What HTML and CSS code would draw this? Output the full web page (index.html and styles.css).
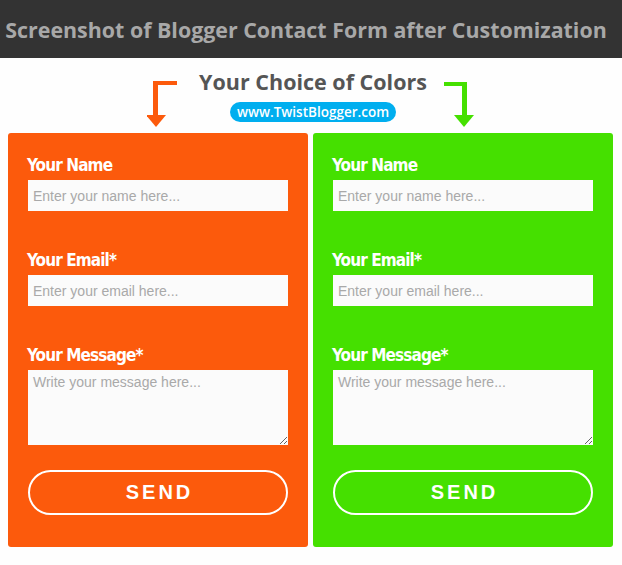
FILE: index.html
```html
<!DOCTYPE html>
<html lang="en">
<head>
<meta charset="utf-8">
<title>Blogger Contact Form</title>
<link rel="stylesheet" href="styles.css">
</head>
<body>
<header class="topbar">
  <h1 class="topbar-title">Screenshot of Blogger Contact Form after Customization</h1>
</header>
<section class="intro">
  <svg class="arrow arrow-left" width="30" height="47" viewBox="0 0 30 47">
    <rect x="6" y="1" width="24" height="4" fill="#fc5a0c"/>
    <rect x="6" y="1" width="5" height="36" fill="#fc5a0c"/>
    <polygon points="-1,35 19,35 9,47" fill="#fc5a0c"/>
  </svg>
  <div class="intro-text">
    <h2 class="intro-title">Your Choice of Colors</h2>
    <span class="badge">www.TwistBlogger.com</span>
  </div>
  <svg class="arrow arrow-right" width="31" height="47" viewBox="0 0 31 47">
    <rect x="0" y="2" width="23" height="4" fill="#45e000"/>
    <rect x="18" y="2" width="5" height="35" fill="#45e000"/>
    <polygon points="10,35 30,35 20,47" fill="#45e000"/>
  </svg>
</section>
<main class="forms">
  <form class="card card-orange">
    <div class="field">
      <label class="label">Your Name</label>
      <input class="input" type="text" placeholder="Enter your name here...">
    </div>
    <div class="field">
      <label class="label">Your Email*</label>
      <input class="input" type="text" placeholder="Enter your email here...">
    </div>
    <div class="field field-last">
      <label class="label">Your Message*</label>
      <textarea class="textarea" placeholder="Write your message here..."></textarea>
    </div>
    <button class="send" type="button">SEND</button>
  </form>
  <form class="card card-green">
    <div class="field">
      <label class="label">Your Name</label>
      <input class="input" type="text" placeholder="Enter your name here...">
    </div>
    <div class="field">
      <label class="label">Your Email*</label>
      <input class="input" type="text" placeholder="Enter your email here...">
    </div>
    <div class="field field-last">
      <label class="label">Your Message*</label>
      <textarea class="textarea" placeholder="Write your message here..."></textarea>
    </div>
    <button class="send" type="button">SEND</button>
  </form>
</main>
</body>
</html>
```
FILE: styles.css
```css
* { box-sizing: border-box; }
html, body { margin: 0; padding: 0; background: #fefefe; }
body { font-family: "Open Sans", "DejaVu Sans", sans-serif; }

.topbar {
  height: 58px;
  background: #333333;
  display: flex;
  align-items: center;
  justify-content: center;
  padding-right: 10px;
}
.topbar-title {
  margin: 0;
  font-size: 21.4px;
  font-weight: 700;
  color: #a8a8a8;
  white-space: nowrap;
  letter-spacing: 0;
}

.intro {
  display: flex;
  justify-content: center;
  align-items: flex-start;
  padding-top: 11px;
  height: 75px;
}
.arrow { display: block; flex: none; margin-top: 11px; }
.arrow-left { margin-right: 22px; }
.arrow-right { margin-left: 17px; }
.intro-text {
  display: flex;
  flex-direction: column;
  align-items: center;
}
.intro-title {
  margin: 0;
  font-size: 21.5px;
  line-height: 25px;
  font-weight: 700;
  color: #555555;
}
.badge {
  margin-top: 8px;
  height: 20px;
  line-height: 20px;
  padding: 0 7px;
  border-radius: 10px;
  background: #00aeef;
  color: #ffffff;
  font-size: 13.5px;
  font-weight: 600;
}

.forms {
  display: flex;
  gap: 5px;
  padding-left: 8px;
}
.card {
  width: 300px;
  margin: 0;
  padding: 20px 20px 32px;
  border-radius: 3px;
}
.card-orange { background: #fc5a0c; }
.card-green { background: #45e000; }

.field { margin-bottom: 37px; }
.field-last { margin-bottom: 25px; }
.label {
  display: block;
  height: 27px;
  line-height: 25px;
  font-family: "DejaVu Sans Condensed", "DejaVu Sans", sans-serif;
  font-weight: 700;
  font-size: 17px;
  letter-spacing: -0.9px;
  color: #ffffff;
  margin-left: -1px;
}
.input, .textarea {
  display: block;
  width: 260px;
  border: none;
  margin: 0;
  background: #fbfbfb;
  font-family: "Liberation Sans", Arial, sans-serif;
  font-size: 14px;
  color: #333;
  padding: 0 5px;
  outline: none;
}
.input { height: 31px; }
.textarea {
  height: 75px;
  padding: 4px 5px;
  resize: vertical;
}
.input::placeholder, .textarea::placeholder { color: #a9a9a9; }

.send {
  display: block;
  width: 260px;
  height: 45px;
  margin: 0;
  border: 2px solid #ffffff;
  border-radius: 23px;
  background: transparent;
  color: #ffffff;
  font-family: "Liberation Sans", Arial, sans-serif;
  font-weight: 700;
  font-size: 20px;
  letter-spacing: 3px;
  padding: 0 0 0 3px;
}
```
